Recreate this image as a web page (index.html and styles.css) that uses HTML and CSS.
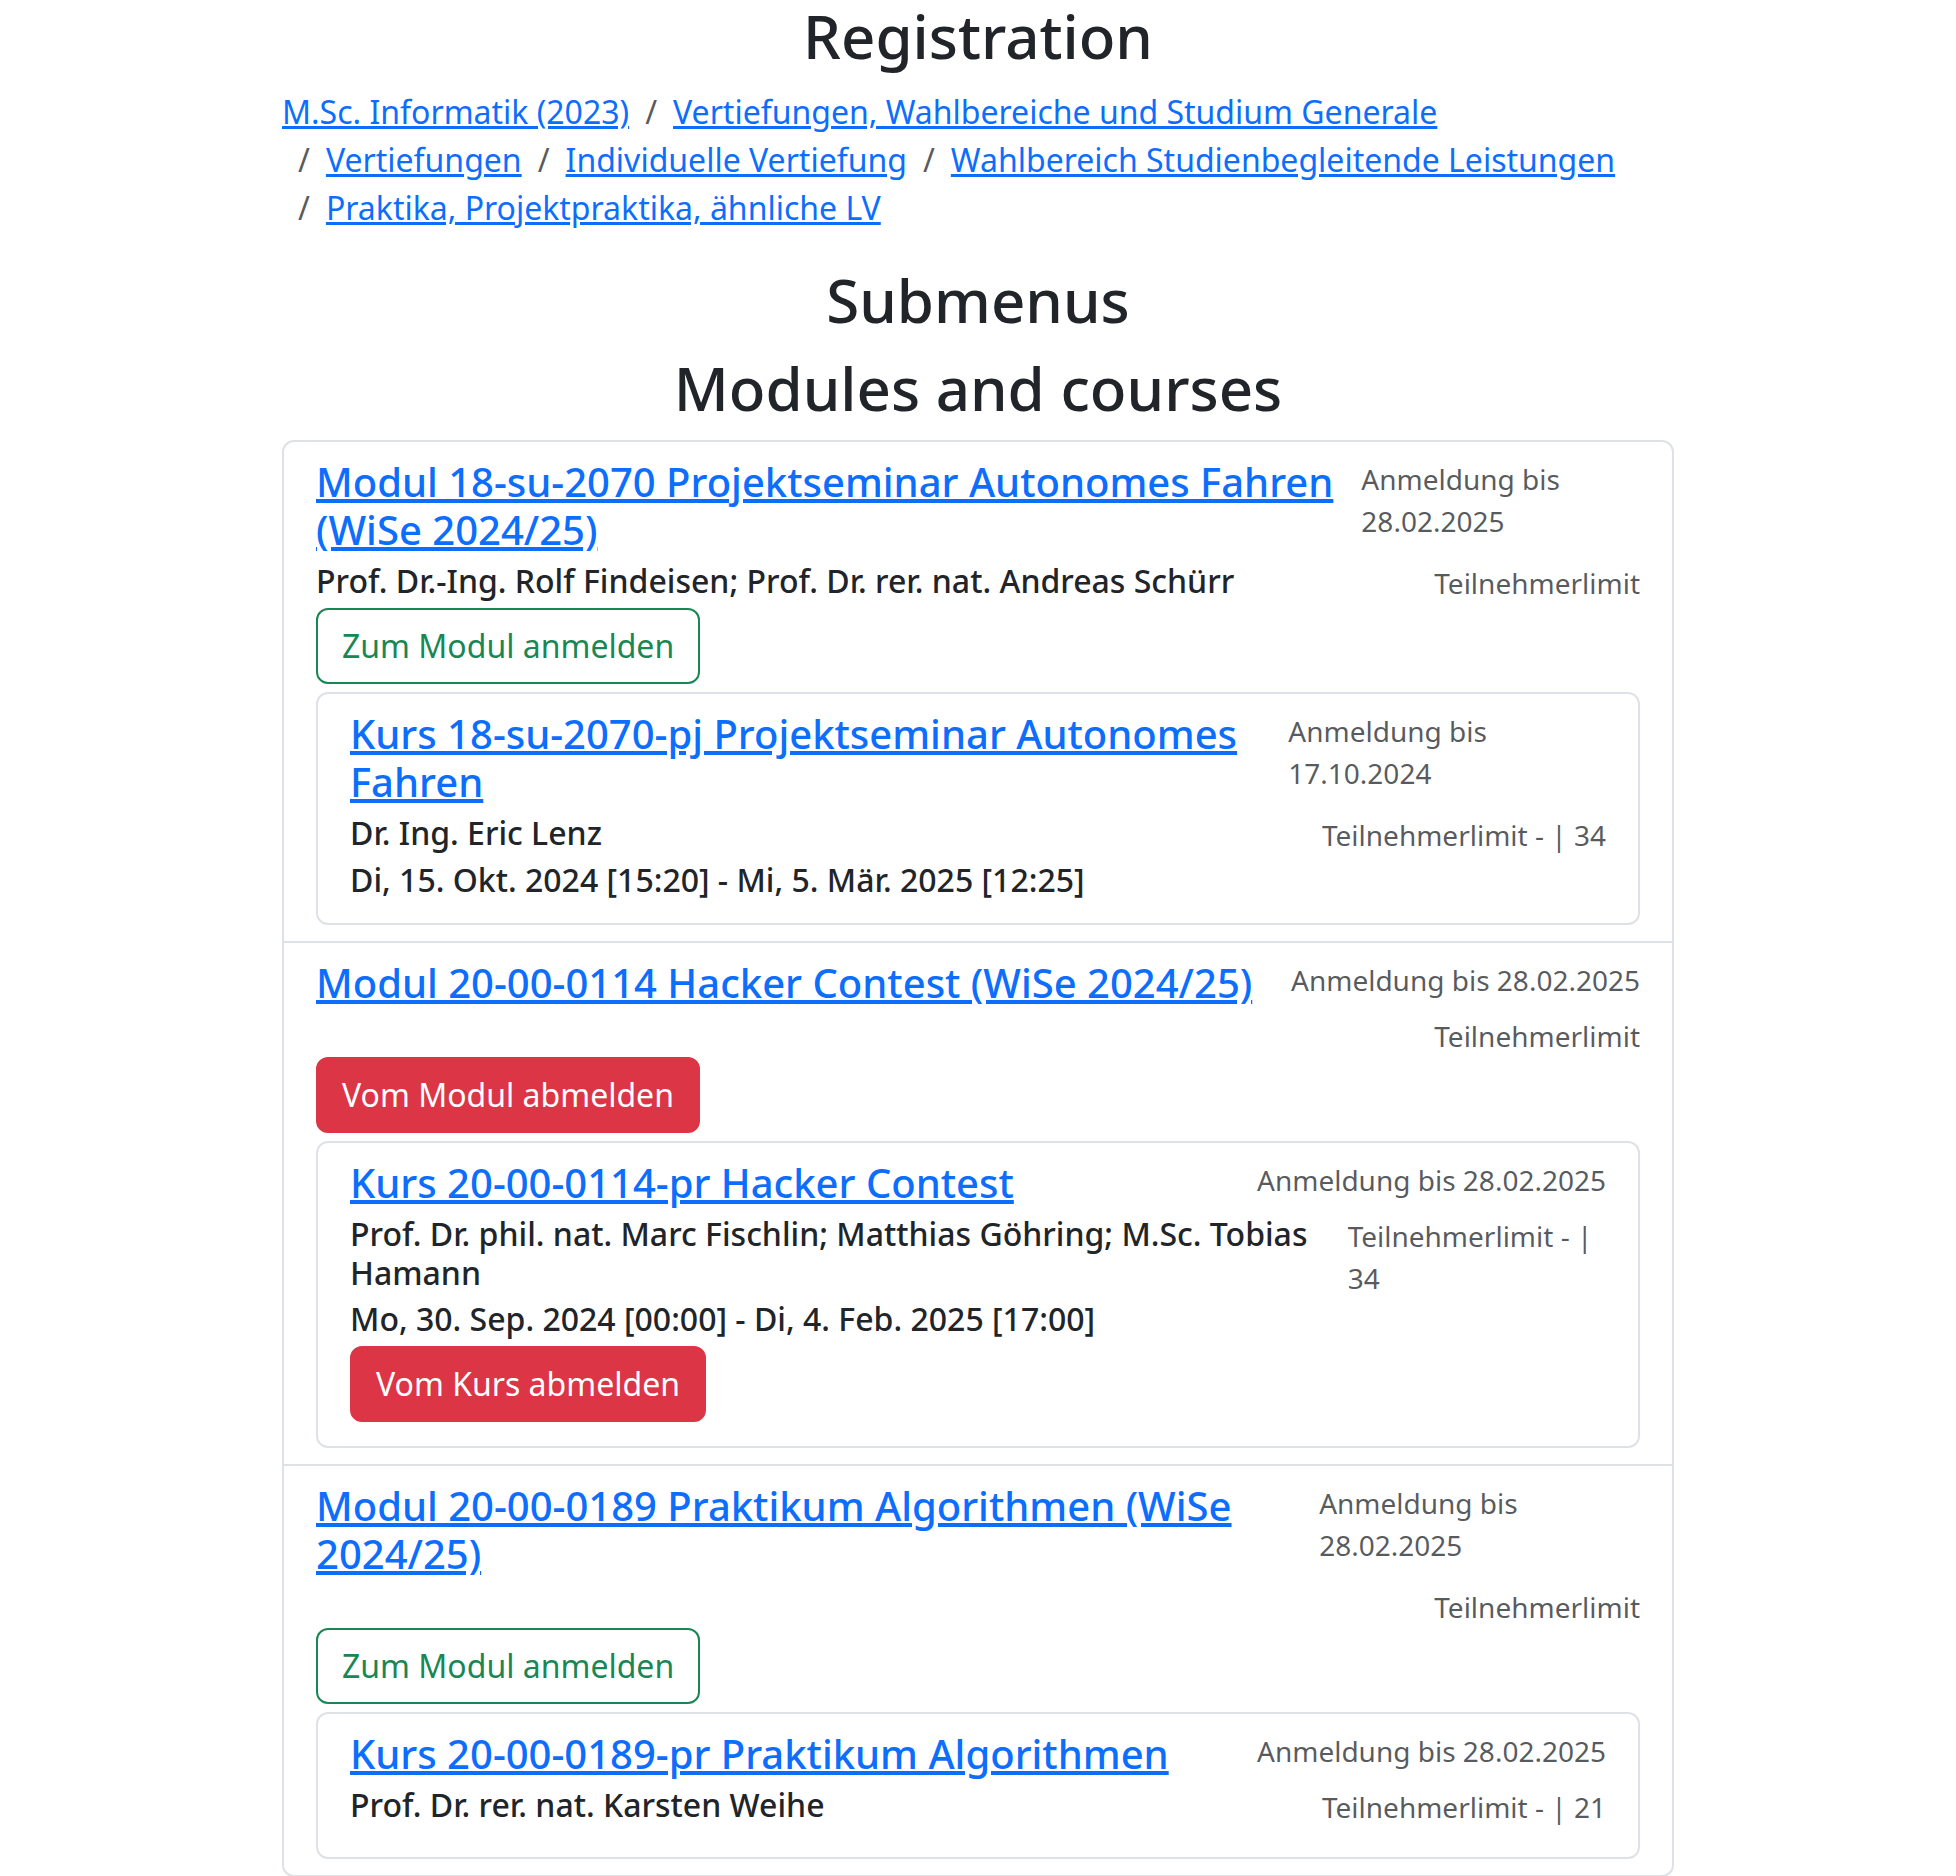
FILE: index.html
```html
<!DOCTYPE html>
<html lang="de">
<head>
<meta charset="utf-8">
<title>Registration</title>
<link rel="stylesheet" href="styles.css">
</head>
<body>
<div class="container">
  <h2 class="page-title">Registration</h2>
  <ol class="breadcrumb">
    <li class="crumb"><a href="#">M.Sc. Informatik (2023)</a></li>
    <li class="crumb"><a href="#">Vertiefungen, Wahlbereiche und Studium Generale</a></li>
    <li class="crumb"><a href="#">Vertiefungen</a></li>
    <li class="crumb"><a href="#">Individuelle Vertiefung</a></li>
    <li class="crumb"><a href="#">Wahlbereich Studienbegleitende Leistungen</a></li>
    <li class="crumb"><a href="#">Praktika, Projektpraktika, ähnliche LV</a></li>
  </ol>
  <h2 class="section-title">Submenus</h2>
  <h2 class="section-title">Modules and courses</h2>
  <ul class="module-list">
    <li class="module">
      <div class="row-line">
        <h5 class="item-title"><a href="#">Modul 18-su-2070 Projektseminar Autonomes Fahren (WiSe 2024/25)</a></h5>
        <small class="meta">Anmeldung bis 28.02.2025</small>
      </div>
      <div class="row-line">
        <h6 class="lecturer">Prof. Dr.-Ing. Rolf Findeisen; Prof. Dr. rer. nat. Andreas Schürr</h6>
        <small class="meta">Teilnehmerlimit</small>
      </div>
      <button class="btn btn-outline-success" type="button">Zum Modul anmelden</button>
      <div class="course-card">
        <div class="row-line">
          <h5 class="item-title"><a href="#">Kurs 18-su-2070-pj Projektseminar Autonomes Fahren</a></h5>
          <small class="meta">Anmeldung bis 17.10.2024</small>
        </div>
        <div class="row-line">
          <h6 class="lecturer">Dr. Ing. Eric Lenz</h6>
          <small class="meta">Teilnehmerlimit - | 34</small>
        </div>
        <h6 class="date">Di, 15. Okt. 2024 [15:20] - Mi, 5. Mär. 2025 [12:25]</h6>
      </div>
    </li>
    <li class="module">
      <div class="row-line">
        <h5 class="item-title"><a href="#">Modul 20-00-0114 Hacker Contest (WiSe 2024/25)</a></h5>
        <small class="meta">Anmeldung bis 28.02.2025</small>
      </div>
      <div class="row-line">
        <h6 class="lecturer"></h6>
        <small class="meta">Teilnehmerlimit</small>
      </div>
      <button class="btn btn-danger" type="button">Vom Modul abmelden</button>
      <div class="course-card">
        <div class="row-line">
          <h5 class="item-title"><a href="#">Kurs 20-00-0114-pr Hacker Contest</a></h5>
          <small class="meta">Anmeldung bis 28.02.2025</small>
        </div>
        <div class="row-line">
          <h6 class="lecturer">Prof. Dr. phil. nat. Marc Fischlin; Matthias Göhring; M.Sc. Tobias Hamann</h6>
          <small class="meta">Teilnehmerlimit - | 34</small>
        </div>
        <h6 class="date">Mo, 30. Sep. 2024 [00:00] - Di, 4. Feb. 2025 [17:00]</h6>
        <button class="btn btn-danger" type="button">Vom Kurs abmelden</button>
      </div>
    </li>
    <li class="module">
      <div class="row-line">
        <h5 class="item-title"><a href="#">Modul 20-00-0189 Praktikum Algorithmen (WiSe 2024/25)</a></h5>
        <small class="meta">Anmeldung bis 28.02.2025</small>
      </div>
      <div class="row-line">
        <h6 class="lecturer"></h6>
        <small class="meta">Teilnehmerlimit</small>
      </div>
      <button class="btn btn-outline-success" type="button">Zum Modul anmelden</button>
      <div class="course-card">
        <div class="row-line">
          <h5 class="item-title"><a href="#">Kurs 20-00-0189-pr Praktikum Algorithmen</a></h5>
          <small class="meta">Anmeldung bis 28.02.2025</small>
        </div>
        <div class="row-line">
          <h6 class="lecturer">Prof. Dr. rer. nat. Karsten Weihe</h6>
          <small class="meta">Teilnehmerlimit - | 21</small>
        </div>
        <h6 class="date"></h6>
      </div>
    </li>
  </ul>
</div>
</body>
</html>
```
FILE: styles.css
```css
html, body {
  margin: 0;
  padding: 0;
}

body {
  font-family: "Noto Sans", "Open Sans", sans-serif;
  font-size: 32px;
  line-height: 1.5;
  color: #212529;
  background: #fff;
}

a {
  color: #0d6efd;
  text-decoration: underline;
}

.container {
  max-width: 1440px;
  margin: 0 auto;
  padding: 0 24px;
  box-sizing: border-box;
}

.page-title,
.section-title {
  margin: 0 0 16px;
  font-size: 60px;
  font-weight: 500;
  line-height: 1.2;
  text-align: center;
}

.breadcrumb {
  display: flex;
  flex-wrap: wrap;
  list-style: none;
  margin: 0 0 32px;
  padding: 0;
}

.crumb + .crumb {
  padding-left: 16px;
}

.crumb + .crumb::before {
  float: left;
  padding-right: 16px;
  color: rgba(33, 37, 41, 0.75);
  content: "/";
}

.module-list {
  list-style: none;
  margin: 0;
  padding: 0;
  border: 2px solid #dee2e6;
  border-radius: 12px;
}

.module {
  padding: 16px 32px;
}

.module + .module {
  border-top: 2px solid #dee2e6;
}

.row-line {
  display: flex;
  justify-content: space-between;
}

.item-title {
  margin: 0 0 8px;
  font-size: 40px;
  font-weight: 500;
  line-height: 1.2;
}

.meta {
  font-size: 28px;
  line-height: 42px;
  color: rgba(33, 37, 41, 0.75);
}

.lecturer,
.date {
  margin: 0 0 8px;
  font-size: 32px;
  font-weight: 500;
  line-height: 1.2;
}

.btn {
  display: block;
  width: fit-content;
  margin: 0 0 8px;
  padding: 12px 24px;
  font-family: inherit;
  font-size: 32px;
  line-height: 1.5;
  border: 2px solid transparent;
  border-radius: 12px;
  background: transparent;
}

.btn-outline-success {
  color: #198754;
  border-color: #198754;
}

.btn-danger {
  color: #fff;
  background: #dc3545;
  border-color: #dc3545;
}

.course-card {
  border: 2px solid #dee2e6;
  border-radius: 12px;
  padding: 16px 32px;
}
```
